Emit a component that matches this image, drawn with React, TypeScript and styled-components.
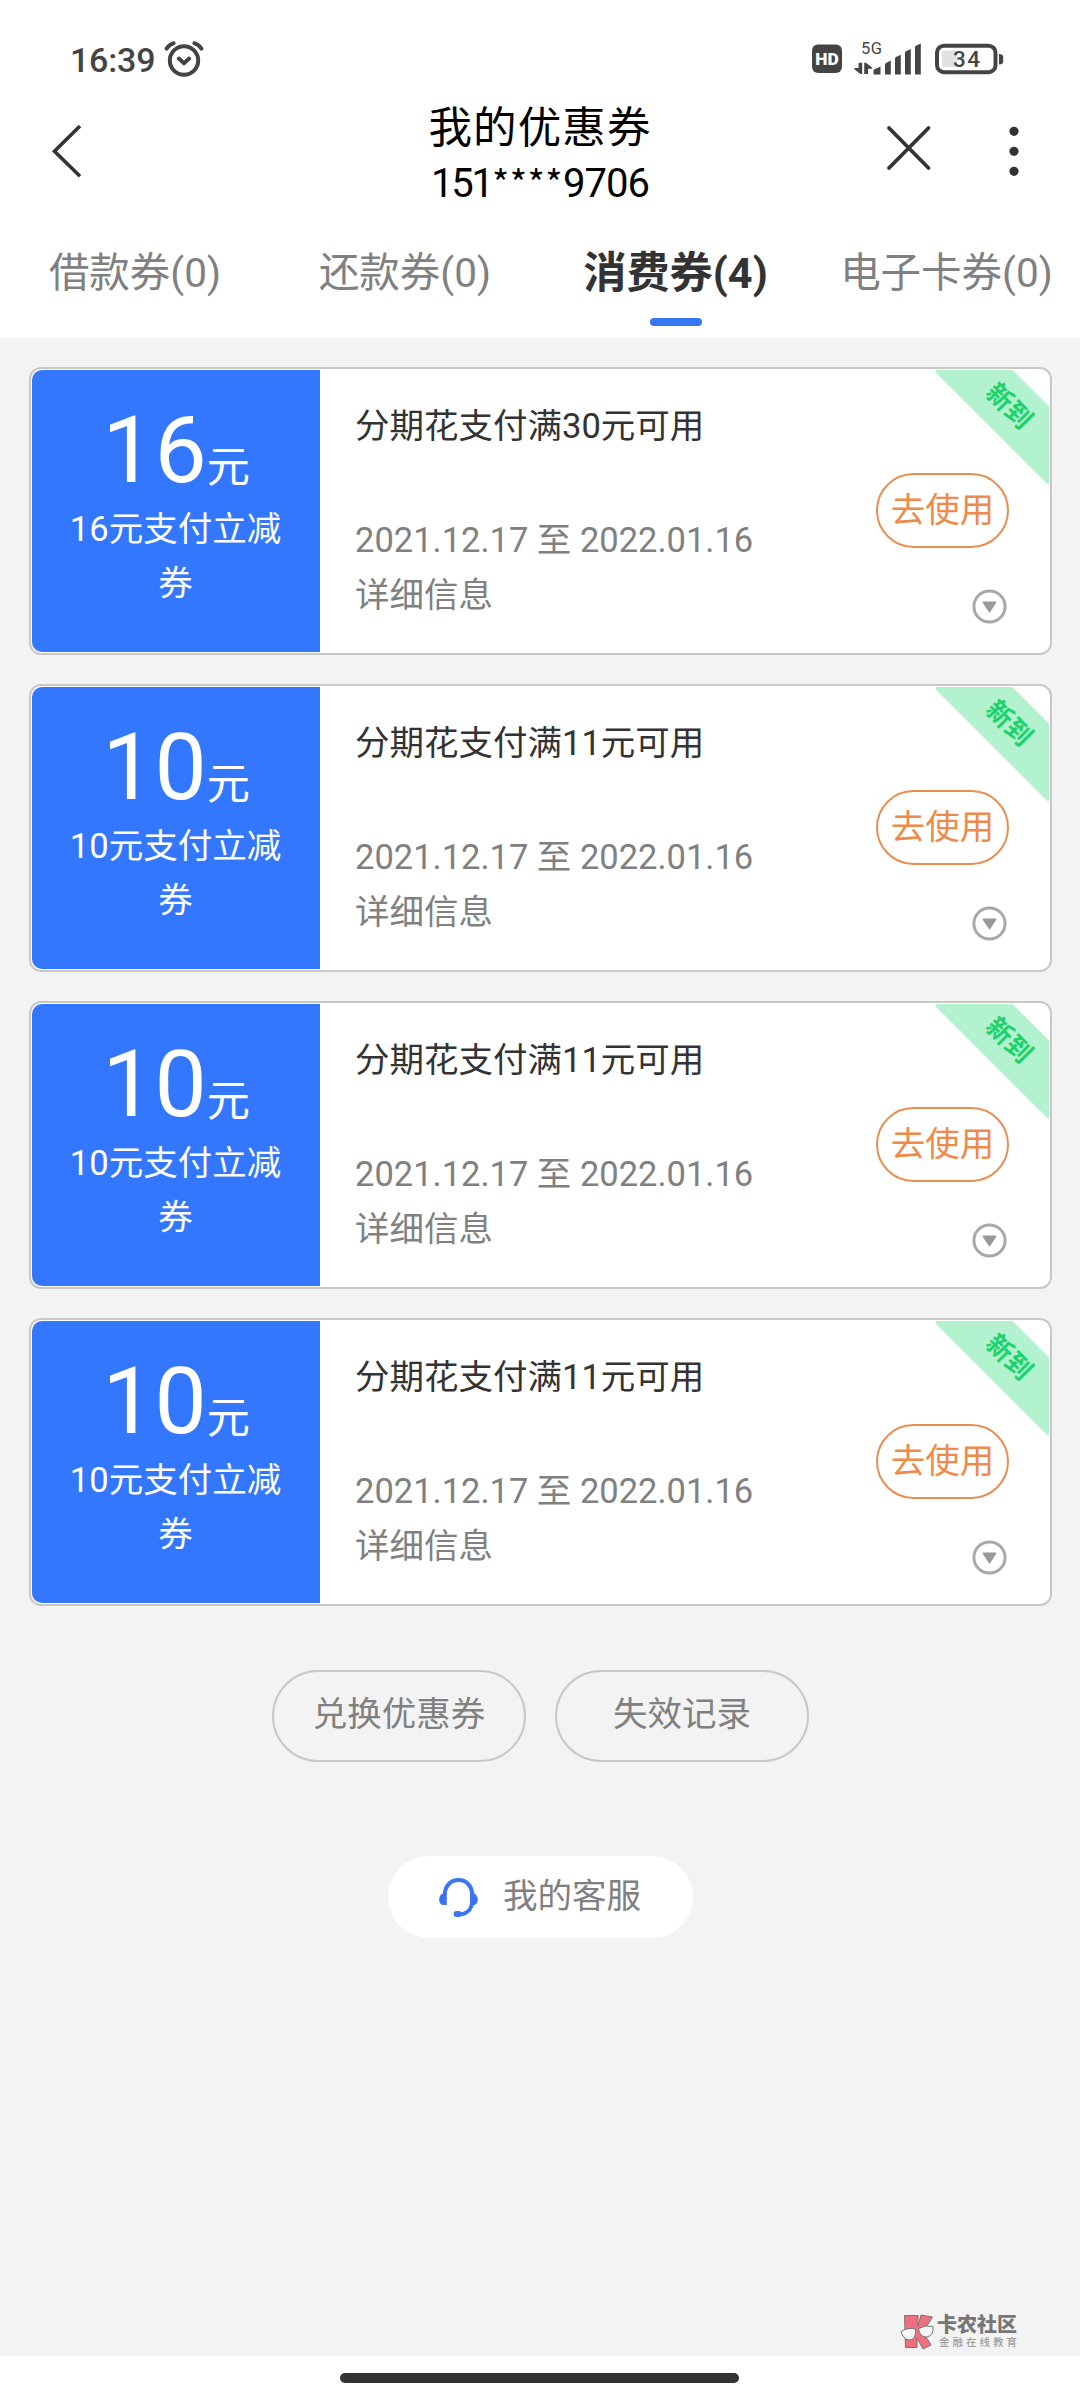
import React from "react";
import styled, { createGlobalStyle, css } from "styled-components";

const GlobalStyle = createGlobalStyle`
  * { box-sizing: border-box; }
  html, body { margin: 0; padding: 0; background: #fff; }
  body {
    font-family: Roboto, "Noto Sans CJK SC", sans-serif;
    color: #333;
    -webkit-font-smoothing: antialiased;
  }
  button { font-family: inherit; padding: 0; margin: 0; background: none; border: 0; }
`;

const Screen = styled.div`
  width: 1080px;
  height: 2400px;
  display: flex;
  flex-direction: column;
  background: #fff;
  overflow: hidden;
`;

const StatusBar = styled.div`
  height: 96px;
  padding: 24px 76px 0 70px;
  display: flex;
  justify-content: space-between;
  align-items: flex-start;
`;

const StatusGroup = styled.div`
  display: flex;
  height: 70px;
  align-items: center;
`;

const Clock = styled.span`
  font-size: 34px;
  line-height: 40px;
  padding-top: 1px;
  font-weight: 500;
  letter-spacing: -0.2px;
  color: #444;
  margin-right: 9px;
`;

const Header = styled.header`
  height: 114px;
  display: grid;
  grid-template-columns: 260px 1fr 260px;
`;

const BackButton = styled.button`
  justify-self: start;
  align-self: start;
  margin: 26px 0 0 49px;
  height: 58px;
  line-height: 0;
`;

const TitleBlock = styled.div`
  display: flex;
  flex-direction: column;
  align-items: center;
  padding-top: 5px;
`;

const Title = styled.h1`
  margin: 0;
  font-size: 43.5px;
  line-height: 56px;
  font-weight: 400;
  letter-spacing: 1.1px;
  color: #000;
`;

const Phone = styled.div`
  display: flex;
  align-items: baseline;
  height: 52px;
  font-size: 40px;
  line-height: 48px;
  color: #000;
`;

const PhoneDigits = styled.span<{ $tracking: number }>`
  letter-spacing: ${(p) => p.$tracking}px;
`;

const PhoneMask = styled.span`
  font-family: "Noto Sans CJK SC", sans-serif;
  font-size: 37px;
  letter-spacing: 0.5px;
`;

const HeaderActions = styled.div`
  display: flex;
  justify-content: flex-end;
  align-items: flex-start;
  gap: 72px;
  padding: 26px 58px 0 0;
`;

const Tabs = styled.nav`
  height: 128px;
  display: grid;
  grid-template-columns: 270px 270px 271px 271px;
`;

const Tab = styled.button<{ $active?: boolean }>`
  display: flex;
  flex-direction: column;
  align-items: center;
  white-space: nowrap;
  padding-top: 33px;
  font-size: 40.5px;
  line-height: 60px;
  color: #808080;
  ${(p) =>
    p.$active &&
    css`
      padding-top: 34px;
      font-size: 43.2px;
      font-weight: 700;
      color: #333;
      &::after {
        content: "";
        width: 52px;
        height: 8px;
        margin-top: 14px;
        border-radius: 4px;
        background: #3478f6;
      }
    `}
`;

const Content = styled.main`
  flex: 1;
  background: #f3f3f3;
  padding: 29px 28px 6px 29px;
  display: flex;
  flex-direction: column;
`;

const CouponList = styled.div`
  display: flex;
  flex-direction: column;
  gap: 29px;
`;

const Coupon = styled.article`
  position: relative;
  height: 288px;
  padding: 1px;
  display: flex;
  border: 2px solid #c8c8c8;
  border-radius: 12px;
  background: #fff;
`;

const Amount = styled.div`
  width: 288px;
  padding: 33px 36px 0;
  border-radius: 10px 0 0 10px;
  background: #3377ff;
  color: #fff;
  text-align: center;
`;

const AmountValue = styled.div`
  font-size: 93px;
  line-height: 96px;
  height: 96px;
  white-space: nowrap;
`;

const Unit = styled.span`
  font-size: 43.2px;
`;

const AmountNote = styled.div`
  margin: 3px 1px 0 0;
  font-size: 34.5px;
  line-height: 54.4px;
`;

const Details = styled.div`
  flex: 1;
  padding: 29px 0 0 35px;
  font-size: 34.5px;
  line-height: 54.4px;
  color: #808080;
`;

const CouponTitle = styled.div`
  color: #333;
  margin-bottom: 60px;
`;

const CouponSide = styled.div`
  width: 133px;
  margin-right: 40px;
  padding-top: 103px;
  display: flex;
  flex-direction: column;
  align-items: flex-end;
`;

const UseButton = styled.button`
  width: 133px;
  height: 75px;
  padding-bottom: 2px;
  border: 2px solid #e88e50;
  border-radius: 38px;
  font-size: 34.5px;
  line-height: 50px;
  color: #ee8a4a;
  white-space: nowrap;
`;

const ExpandButton = styled.button`
  margin: 41px 2px 0 0;
  line-height: 0;
`;

const RibbonClip = styled.div`
  position: absolute;
  top: 1px;
  right: 1px;
  width: 113px;
  height: 114px;
  overflow: hidden;
  border-top-right-radius: 9px;
`;

const Ribbon = styled.div`
  position: absolute;
  left: -26.5px;
  top: 9px;
  width: 200px;
  height: 55.5px;
  padding-right: 2px;
  transform: rotate(45deg);
  background: #b2f2ce;
  color: #1ad36c;
  font-size: 26px;
  font-weight: 700;
  line-height: 56px;
  text-align: center;
`;

const Actions = styled.div`
  display: flex;
  justify-content: center;
  gap: 29px;
  margin-top: 64px;
`;

const PillButton = styled.button`
  width: 254px;
  height: 92px;
  padding-bottom: 4px;
  border: 2px solid #c8c8c8;
  border-radius: 46px;
  font-size: 34.5px;
  line-height: 50px;
  color: #808080;
`;

const ServiceButton = styled.button`
  align-self: center;
  width: 305px;
  height: 82px;
  margin-top: 94px;
  border-radius: 41px;
  background: #fff;
  display: flex;
  align-items: center;
  justify-content: center;
  gap: 25px;
  padding-right: 1px;
  font-size: 34.5px;
  line-height: 50px;
  color: #808080;
`;

const ServiceLabel = styled.span`
  padding-bottom: 3px;
`;

const Watermark = styled.div`
  margin: auto 34px 0 0;
  align-self: flex-end;
  display: flex;
  align-items: center;
  gap: 3px;
`;

const WatermarkName = styled.div`
  font-size: 20px;
  line-height: 22px;
  font-weight: 900;
  color: #777;
`;

const WatermarkTag = styled.div`
  padding-left: 2px;
  font-size: 10.5px;
  line-height: 14px;
  letter-spacing: 3px;
  font-weight: 500;
  color: #a0a0a0;
  white-space: nowrap;
  width: 81px;
`;

const HomeArea = styled.footer`
  height: 44px;
  padding: 17px 2px 0 0;
  display: flex;
  justify-content: center;
  align-items: flex-start;
  background: #fff;
`;

const HomeIndicator = styled.div`
  width: 399px;
  height: 10px;
  border-radius: 5px;
  background: #333;
`;

const AlarmIcon = () => (
  <svg width="40" height="38" viewBox="0 0 40 38" fill="none" stroke="#444" strokeWidth="4" strokeLinecap="round">
    <circle cx="20" cy="20.5" r="14.2" />
    <path d="M14.8 18.6L20 23.2L25.2 18.6" strokeLinejoin="round" />
    <path d="M2.6 8.6Q5.4 4.4 9.6 3.2M37.4 8.6Q34.6 4.4 30.4 3.2" />
  </svg>
);

const StatusIcons = () => (
  <svg width="193" height="38" viewBox="811 40 193 38" fontFamily="Roboto, sans-serif">
    <rect x="812" y="44.5" width="30" height="28.5" rx="6" fill="#444" />
    <text x="815.3" y="65.2" fontSize="17" fontWeight="900" fill="#fff" textLength="23.5" lengthAdjust="spacingAndGlyphs">HD</text>
    <text x="861" y="54" fontSize="16.5" fill="#444" textLength="21">5G</text>
    <g fill="#444">
      <path d="M858.600 62.800h3.600v11.200h-1.800l-6-4.800v-1.200h4.200zM864.200 74h3.800v-5.200h4v-1.400l-6-4.600h-1.800z" />
      <path d="M873.500 74.500v-3.600q0-1 1-1.600l6-2.900v8.100zM885 74.500v-10q0-1 1-1.600l4.800-2.400v14zM895 74.500v-15.800q0-1 1-1.600l4.800-2.400v19.800zM905 74.500v-21.600q0-1 1-1.600l4.800-2.400v25.600zM915 74.500v-27.100q0-1 1-1.600l4.800-2.400v31.100z" />
      <path d="M999 54q4.200 0 4.200 3v4.500q0 3-4.200 3z" />
    </g>
    <rect x="942" y="50.5" width="15" height="16.5" rx="2" fill="#e2e2e2" />
    <rect x="937" y="45.700" width="58.500" height="26.500" rx="7" fill="none" stroke="#444" strokeWidth="4" />
    <text x="953" y="67.3" fontSize="22.500" fontWeight="500" fill="#444" textLength="27">34</text>
  </svg>
);

const BackIcon = () => (
  <svg width="34" height="58" viewBox="0 0 34 58" fill="none" stroke="#333" strokeWidth="3.600">
    <path d="M31 4L5.500 29.200L31 54.200" />
  </svg>
);

const CloseIcon = () => (
  <svg width="50" height="50" viewBox="0 0 50 50" fill="none" stroke="#333" strokeWidth="3.800" strokeLinecap="round">
    <path d="M5 6L44.500 46M44.500 6L5 46" />
  </svg>
);

const MoreIcon = () => (
  <svg width="16" height="58" viewBox="0 0 16 58" fill="#333">
    <circle cx="8" cy="9.300" r="4.600" />
    <circle cx="8" cy="29.300" r="4.600" />
    <circle cx="8" cy="49.300" r="4.600" />
  </svg>
);

const ExpandIcon = () => (
  <svg width="35" height="35" viewBox="0 0 35 35">
    <circle cx="17.500" cy="17.500" r="15.600" fill="none" stroke="#a8a8a8" strokeWidth="3" />
    <path d="M11.400 13.400h12.200l-6.100 9.200z" fill="#999" stroke="#999" strokeWidth="1.600" strokeLinejoin="round" />
  </svg>
);

const HeadsetIcon = () => (
  <svg width="39" height="39" viewBox="0 0 39 39">
    <path d="M5.800 17C5.800 7.500 12 2.100 19.500 2.100S33.200 7.500 33.200 17v5C33.200 31 28 36.600 19 36.600" fill="none" stroke="#3a76ee" strokeWidth="4" />
    <path d="M7.800 15v12H5C2 27 0.200 24.600 0.200 21.400S2 15.600 5 15zM31.200 15v12H34c3 0 4.800-2.400 4.800-5.600S37 15.600 34 15z" fill="#3a72f0" />
    <rect x="14.600" y="33" width="8" height="6" rx="3" fill="#3a76ee" />
  </svg>
);

const WatermarkLogo = () => (
  <svg width="34" height="36" viewBox="0 0 34 36" strokeLinejoin="round">
    <path d="M4.500 1.500H18V12L21 1L32.500 3L23 18L31 31L23 35L17 24V33.500H5.500z" fill="#f06f7e" stroke="#777" strokeWidth="1" />
    <path d="M1 17.500Q8 13 15.500 15Q16.500 26 9 26Q3 25 1 17.500zM18.500 14.500Q26 10.500 33 12.500Q34 22 26.500 23Q19.500 23 18.500 14.500z" fill="#f4f4f4" stroke="#777" strokeWidth="1" />
  </svg>
);

const tabs = ["借款券(0)", "还款券(0)", "消费券(4)", "电子卡券(0)"];

const coupons = [
  { amount: 16, min: 30 },
  { amount: 10, min: 11 },
  { amount: 10, min: 11 },
  { amount: 10, min: 11 },
];

export default function App() {
  return (
    <>
      <GlobalStyle />
      <Screen>
        <StatusBar>
          <StatusGroup>
            <Clock>16:39</Clock>
            <AlarmIcon />
          </StatusGroup>
          <StatusGroup>
            <StatusIcons />
          </StatusGroup>
        </StatusBar>
        <Header>
          <BackButton aria-label="返回">
            <BackIcon />
          </BackButton>
          <TitleBlock>
            <Title>我的优惠券</Title>
            <Phone>
              <PhoneDigits $tracking={-2.2}>151</PhoneDigits>
              <PhoneMask>****</PhoneMask>
              <PhoneDigits $tracking={-1}>9706</PhoneDigits>
            </Phone>
          </TitleBlock>
          <HeaderActions>
            <CloseIcon />
            <MoreIcon />
          </HeaderActions>
        </Header>
        <Tabs>
          {tabs.map((label, i) => (
            <Tab key={label} $active={i === 2}>
              {label}
            </Tab>
          ))}
        </Tabs>
        <Content>
          <CouponList>
            {coupons.map((c, i) => (
              <Coupon key={i}>
                <Amount>
                  <AmountValue>
                    {c.amount}
                    <Unit>元</Unit>
                  </AmountValue>
                  <AmountNote>{c.amount}元支付立减券</AmountNote>
                </Amount>
                <Details>
                  <CouponTitle>分期花支付满{c.min}元可用</CouponTitle>
                  <div>2021.12.17 至 2022.01.16</div>
                  <div>详细信息</div>
                </Details>
                <CouponSide>
                  <UseButton>去使用</UseButton>
                  <ExpandButton aria-label="展开">
                    <ExpandIcon />
                  </ExpandButton>
                </CouponSide>
                <RibbonClip>
                  <Ribbon>新到</Ribbon>
                </RibbonClip>
              </Coupon>
            ))}
          </CouponList>
          <Actions>
            <PillButton>兑换优惠券</PillButton>
            <PillButton>失效记录</PillButton>
          </Actions>
          <ServiceButton>
            <HeadsetIcon />
            <ServiceLabel>我的客服</ServiceLabel>
          </ServiceButton>
          <Watermark>
            <WatermarkLogo />
            <div>
              <WatermarkName>卡农社区</WatermarkName>
              <WatermarkTag>金融在线教育</WatermarkTag>
            </div>
          </Watermark>
        </Content>
        <HomeArea>
          <HomeIndicator />
        </HomeArea>
      </Screen>
    </>
  );
}
